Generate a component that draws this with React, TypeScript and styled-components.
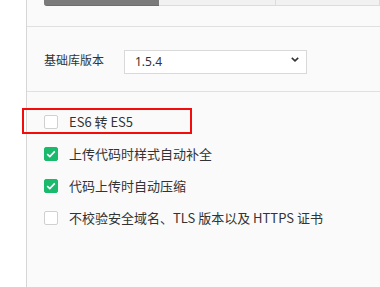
import React from "react";
import styled, { createGlobalStyle } from "styled-components";

const GlobalStyle = createGlobalStyle`
  html, body {
    margin: 0;
    padding: 0;
    background: #ffffff;
  }
  body {
    font-family: "Noto Sans CJK SC", "Noto Sans", sans-serif;
    color: #333333;
  }
`;

const Page = styled.div`
  display: flex;
  width: 380px;
  height: 287px;
  overflow: hidden;
`;

const LeftStrip = styled.div`
  width: 26px;
  flex: none;
  background: #ffffff;
  border-right: 1px solid #d6d6d6;
  box-shadow: 1px 0 2px rgba(0, 0, 0, 0.04);
`;

const Panel = styled.div`
  flex: 1;
  display: flex;
  flex-direction: column;
  background: #fafafa;
`;

const TabBar = styled.div`
  display: flex;
  height: 6px;
  padding-left: 17px;
  flex: none;
`;

const Tab = styled.div<{ $active?: boolean; $width?: number }>`
  width: ${(p) => (p.$width ? `${p.$width}px` : "auto")};
  flex: ${(p) => (p.$width ? "none" : "1")};
  background: ${(p) => (p.$active ? "#7b7b7b" : "#f1f1f1")};
  border-bottom: 1px solid ${(p) => (p.$active ? "#6e6e6e" : "#dcdcdc")};
  border-right: ${(p) => (p.$active ? "none" : "1px solid #dcdcdc")};
  border-bottom-left-radius: ${(p) => (p.$active ? "3px" : "0")};
  box-sizing: border-box;
`;

const HeaderGap = styled.div`
  height: 20px;
  border-bottom: 1px solid #e0e0e0;
  flex: none;
`;

const SettingRow = styled.div`
  display: flex;
  align-items: center;
  padding: 20px 17px 20px 17px;
  border-bottom: 1px solid #e0e0e0;
`;

const Label = styled.span`
  width: 80px;
  font-size: 12px;
  color: #333333;
`;

const SelectBox = styled.div`
  position: relative;
  width: 183px;
  height: 24px;
`;

const Select = styled.select`
  appearance: none;
  width: 100%;
  height: 100%;
  box-sizing: border-box;
  border: 1px solid #d9d9d9;
  background: #ffffff;
  font-family: "Noto Sans", "Liberation Sans", sans-serif;
  font-size: 12px;
  color: #333333;
  padding: 0 0 0 10px;
  outline: none;
`;

const Chevron = styled.svg`
  position: absolute;
  right: 8px;
  top: 10px;
  pointer-events: none;
`;

const OptionList = styled.div`
  display: flex;
  flex-direction: column;
  gap: 18px;
  padding: 23px 17px;
`;

const OptionRow = styled.label<{ $highlight?: boolean }>`
  position: relative;
  display: flex;
  align-items: center;
  gap: 11px;
  font-size: 13px;
  color: #333333;
  height: 14px;

  &::after {
    content: "";
    display: ${(p) => (p.$highlight ? "block" : "none")};
    position: absolute;
    left: -22px;
    top: -7px;
    width: 170px;
    height: 26px;
    box-sizing: border-box;
    border: 2px solid #f20c0c;
    pointer-events: none;
  }
`;

const Box = styled.span<{ $checked?: boolean }>`
  width: 14px;
  height: 14px;
  flex: none;
  box-sizing: border-box;
  border-radius: 2px;
  display: flex;
  align-items: center;
  justify-content: center;
  background: ${(p) => (p.$checked ? "#1aba6c" : "#ffffff")};
  border: 1px solid ${(p) => (p.$checked ? "#1aba6c" : "#d0d0d0")};
`;

const Text = styled.span`
  line-height: 14px;
  white-space: nowrap;
`;

function Checkbox({ checked }: { checked?: boolean }) {
  return (
    <Box $checked={checked}>
      {checked && (
        <svg width="10" height="8" viewBox="0 0 10 8">
          <path d="M1.2 4.2 L3.8 6.6 L8.8 1.4" fill="none" stroke="#ffffff" strokeWidth="1.6" />
        </svg>
      )}
    </Box>
  );
}

const options = [
  { text: "ES6 转 ES5", checked: false, highlight: true },
  { text: "上传代码时样式自动补全", checked: true },
  { text: "代码上传时自动压缩", checked: true },
  { text: "不校验安全域名、TLS 版本以及 HTTPS 证书", checked: false },
];

export default function App() {
  return (
    <>
      <GlobalStyle />
      <Page>
        <LeftStrip />
        <Panel>
          <TabBar>
            <Tab $active $width={115} />
            <Tab $width={117} />
            <Tab />
          </TabBar>
          <HeaderGap />
          <SettingRow>
            <Label>基础库版本</Label>
            <SelectBox>
              <Select defaultValue="1.5.4">
                <option value="1.5.4">1.5.4</option>
              </Select>
              <Chevron width="8" height="5" viewBox="0 0 8 5">
                <path d="M0.8 0.8 L4 3.8 L7.2 0.8" fill="none" stroke="#333" strokeWidth="1.6" />
              </Chevron>
            </SelectBox>
          </SettingRow>
          <OptionList>
            {options.map((o) => (
              <OptionRow key={o.text} $highlight={o.highlight}>
                <Checkbox checked={o.checked} />
                <Text>{o.text}</Text>
              </OptionRow>
            ))}
          </OptionList>
        </Panel>
      </Page>
    </>
  );
}
